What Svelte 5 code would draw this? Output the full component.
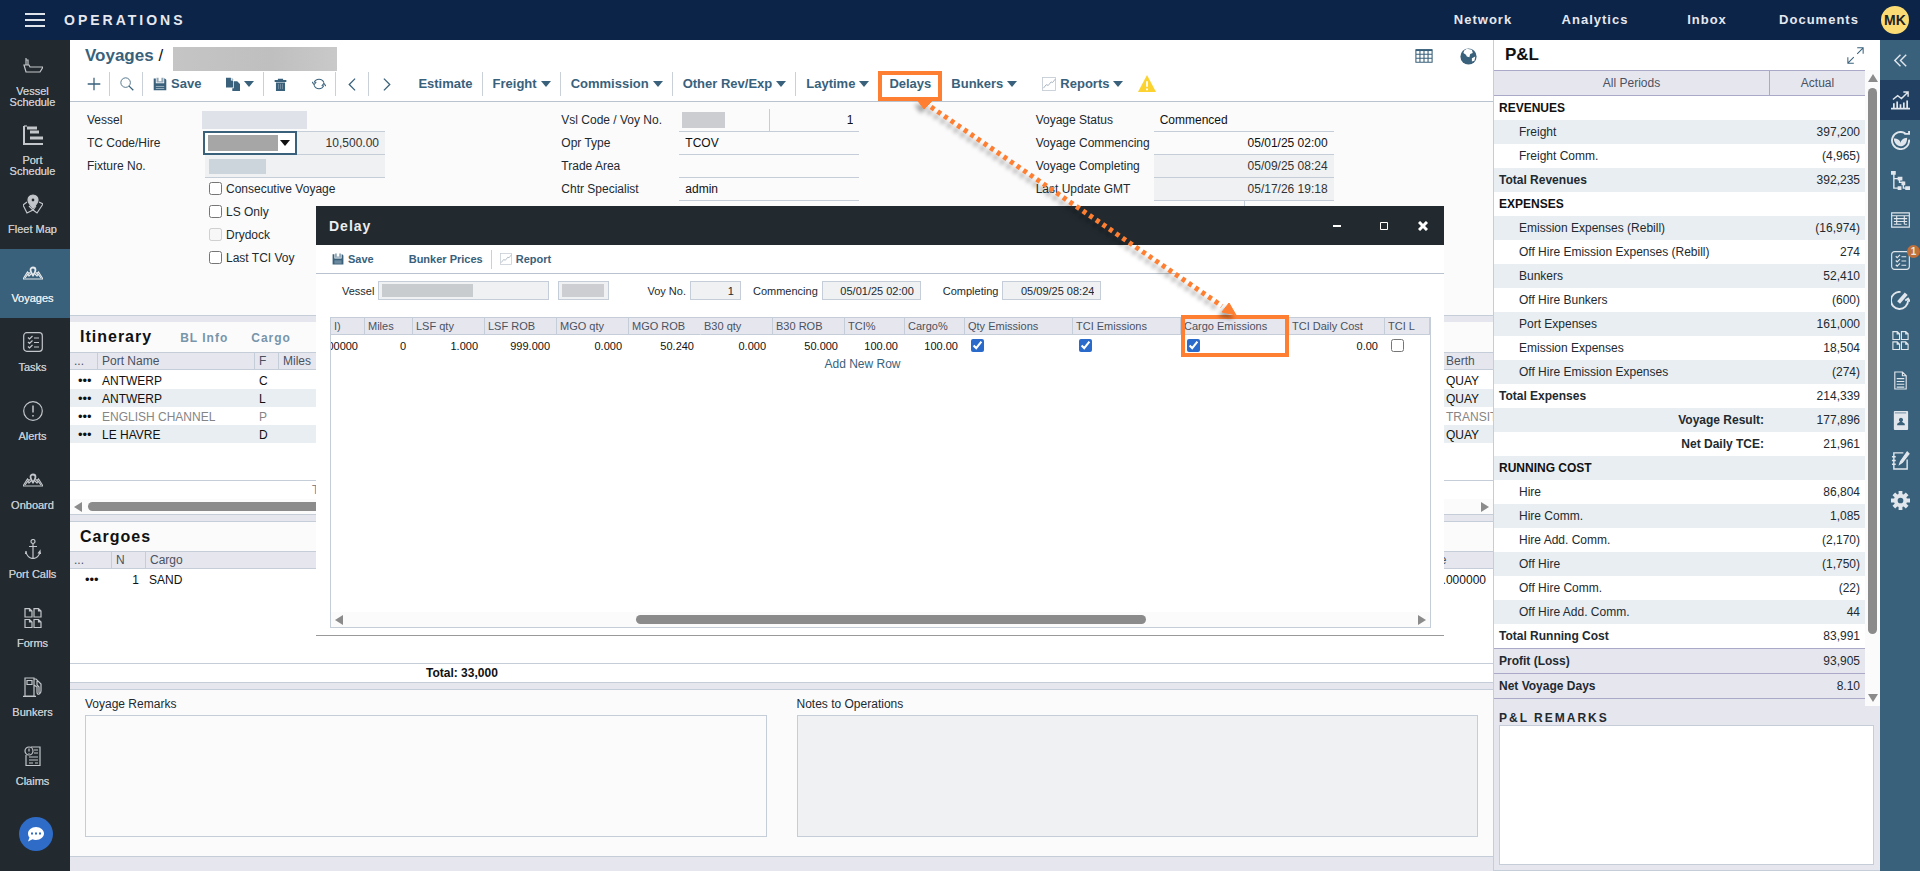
<script>
	const icons = {
		vessel: '<path d="M3 2v7M1 9h5l1 2h13l-3 5H3L1 9zM3 4h2v5" />',
		port: '<path d="M1 1v18h19" stroke-width="2"/><path d="M4 3h10M7 7h9M7 13h13" stroke-width="3"/><path d="M1 1h3" />',
		map: '<path d="M4 8l-4 3 4 8 6-3 4 3 6-9-4-2M6 12l4 4 3-4" /><path fill="currentColor" d="M10 1a5 5 0 0 0-5 5c0 3 5 8 5 8s5-5 5-8a5 5 0 0 0-5-5zm0 3a2 2 0 1 1 0 4 2 2 0 0 1 0-4z" fill-rule="evenodd"/>',
		voyage: '<path d="M0 16h20l-4.500-7-1.500 1.500-1-1M0 16l4.500-7 1.500 1.500 1-1" /><path d="M2 15l3-4 1 2 2-2M18 15l-3-4-1 2-2-2" /><path d="M10 4.500a2.500 2.500 0 0 0-2.500 2.500c0 2 2.500 5.500 2.500 5.500s2.500-3.500 2.500-5.500a2.500 2.500 0 0 0-2.500-2.500z" stroke-width="1.800"/>',
		tasks: '<rect x="0.7" y="0.7" width="18.6" height="18.6" rx="3"/><path d="M5 5.500l1.500 1.500 3-3M5 10l1.500 1.500 3-3M5 14.500l1.500 1.500 3-3M11 6h5M11 10.500h5M11 15h5" />',
		alert: '<circle cx="10" cy="10" r="9.300"/><path d="M10 4.500v7M10 14v1.500" stroke-width="1.500"/>',
		anchor: '<circle cx="10" cy="2.500" r="2"/><path d="M10 4.500v15M6 7.500h8M3 12c0 5 4 7.500 7 7.500s7-2.500 7-7.500l-2 2.500M3 12l-.500 3M17 12l.500 3" />',
		forms: '<path d="M2 .7h4.500L9 3v6H2zM11 .7h4.500L18 3v6h-7zM2 11.500h4.500L9 14v5.500H2zM11 11.500h4.500L18 14v5.500h-7zM6.500.7V3H9M15.500.7V3H18M6.500 11.500V14H9M15.500 11.500V14H18" />',
		fuel: '<path d="M2 19V1h9v18zM0 19.300h13M4 3.500h5v4H4zM11 2h2l5 5v7c0 3-4 5-4 1v-5l-3-2M14 4v4l2 2v6" />',
		claims: '<path d="M8 1h9v18.500H3V9M11 4h4M11 7h4M6 11h9M6 14h9M6 17h4M12 17h3" /><circle cx="6" cy="5" r="4"/><path d="M6 2.500v3M6 7v.800" />',
		plus: '<path d="M10 1v18M1 10h18" stroke-width="1.800"/>',
		search: '<circle cx="8" cy="8" r="6.800"/><path d="M13 13l6 6" stroke-width="1.800"/>',
		save: '<path fill="currentColor" stroke="none" d="M1 2h3v7h12V2h1l2 2v15H1z"/><path stroke="none" fill="currentColor" opacity=".55" d="M5 1h3v5h4V1h3v7H5z"/><path d="M4 13.500h12M4 16.500h12" stroke="#fff" opacity=".6"/>',
		copy: '<path fill="currentColor" stroke="none" d="M0 1h7v4h3v10H0zM11 6h5l4 4v10H9v-4h2z"/><path fill="currentColor" stroke="none" opacity=".6" d="M8 1l3 3H8z"/>',
		trash: '<path fill="currentColor" stroke="none" d="M1 3h5V1h8v2h5v3H1zM3 7h14v13H3z"/><path d="M7 9v8M10 9v8M13 9v8" stroke="#7f98aa"/>',
		refresh: '<path d="M3 8a7.500 7.500 0 0 1 14 0M17 12a7.500 7.500 0 0 1-14 0M0 7l3 4 3-4M20 13l-3-4-3 4" stroke-width="1.500"/>',
		prev: '<path d="M14 1L5 10l9 9" stroke-width="2"/>',
		next: '<path d="M6 1l9 9-9 9" stroke-width="2"/>',
		report: '<rect x=".7" y=".7" width="18.600" height="18.600" stroke="#c3cad2"/><path d="M2 16l4-5 3 1 4-5 2 1 4-5" stroke="#9aa8b5"/>',
		warning: '<path fill="#fbd230" stroke="none" d="M10 0l10 19H0z"/><path d="M10 7v6M10 15v2" stroke="#fff" stroke-width="2"/>',
		sheet: '<path d="M1 3h18v14H1zM1 8h18M1 12.500h18M5.500 3v14M10 3v14M14.500 3v14" /><path d="M1 3.500h18" stroke-width="2"/>',
		globe: '<circle cx="10" cy="10" r="9.500" fill="currentColor" stroke="none"/><path fill="#fff" stroke="none" d="M8 1l6 1 1 4-3 1-1 4-3-1-1-2-3-2 1-3zM14 12l4-2-1 5-3 1z"/>',
		expand: '<path d="M12 1h7v7M19 1l-7 7M8 19H1v-7M1 19l7-7" />',
		collapse: '<path d="M10 4l-6 6 6 6M16 4l-6 6 6 6" stroke-width="1.500"/>',
		chart: '<path d="M0 18.500h20M3 18v-5M6.500 18v-7M10 18v-4M13.500 18v-6M17 18v-8" stroke-width="1.800"/><path d="M2 9l5-4 4 3 7-7M13 1h5v5" stroke-width="1.500"/>',
		eco: '<path d="M15 2.500A9 9 0 1 0 19 9" stroke-width="2"/><path d="M14 3h5V0" stroke-width="2"/><path fill="currentColor" stroke="none" d="M3 8c4 0 7 2 7 5 0-3 3-6 7-6 0 6-3 9-7 9s-7-4-7-8z"/>',
		tree: '<path d="M3 2v16h6M3 8h6M9 8v4h4v6h5" stroke-width="1.500"/><path fill="currentColor" stroke="none" d="M0 0h5v4H0zM7 6h5v4H7zM11 11h4v4h-4zM7 16h4v4H7zM15 16h5v4h-5z"/>',
		invoice: '<path d="M.7 2h18.600v15H.7zM.7 5h18.600M3 8h14M3 11h14M3 14h8M6 5v9M14 14h3M14 5v9" />',
		edit: '<path d="M10 1a9 9 0 1 0 8 9M15 10l3-2 2 3" stroke-width="2"/><path d="M8 12l8-9" stroke-width="4"/>',
		doc: '<path d="M4 1h8l4 4v14H4zM12 1v4h4M6 8h8M6 11h8M6 14h8M6 17h8" />',
		contact: '<rect x="3" y="0" width="15" height="20" rx="1" fill="currentColor" stroke="none"/><path fill="#39617b" stroke="none" d="M10.500 7a2.300 2.300 0 0 1 1 4.300l3 2V15h-8v-1.700l3-2a2.300 2.300 0 0 1 1-4.300z"/><path d="M4 2h12" stroke="#39617b" stroke-width=".7"/>',
		notes: '<path d="M13 2H3v17h14V9M1 6h4M1 10h4M1 14h4" stroke-width="1.500"/><path d="M9 14l1-3 7-10 2 2-7 9z" fill="currentColor"/>',
		gear: '<circle cx="10" cy="10" r="5" stroke-width="4"/><path d="M10 0v4M10 16v4M0 10h4M16 10h4M3 3l3 3M14 14l3 3M3 17l3-3M14 6l3-3" stroke-width="4"/>'
	};

	const nav = [
		['vessel', 'Vessel Schedule'],
		['port', 'Port Schedule'],
		['map', 'Fleet Map'],
		['voyage', 'Voyages'],
		['tasks', 'Tasks'],
		['alert', 'Alerts'],
		['voyage', 'Onboard'],
		['anchor', 'Port Calls'],
		['forms', 'Forms'],
		['fuel', 'Bunkers'],
		['claims', 'Claims']
	];

	const rail = ['collapse', 'chart', 'eco', 'tree', 'invoice', 'tasks', 'edit', 'forms', 'doc', 'contact', 'notes', 'gear'];

	const menus = [
		{label: 'Estimate'},
		{label: 'Freight', caret: true},
		{label: 'Commission', caret: true},
		{label: 'Other Rev/Exp', caret: true},
		{label: 'Laytime', caret: true},
		{label: 'Delays', marked: true},
		{label: 'Bunkers', caret: true, gap: true},
		{label: 'Reports', caret: true, icon: 'report', gap: true}
	];

	const checks = ['Consecutive Voyage', 'LS Only', 'Drydock', 'Last TCI Voy'];

	const ports = [
		['ANTWERP', 'C', 'QUAY'],
		['ANTWERP', 'L', 'QUAY'],
		['ENGLISH CHANNEL', 'P', 'TRANSIT'],
		['LE HAVRE', 'D', 'QUAY']
	];

	const delayCols = [
		['I)', '0.000000', 34],
		['Miles', '0', 48],
		['LSF qty', '1.000', 72],
		['LSF ROB', '999.000', 72],
		['MGO qty', '0.000', 72],
		['MGO ROB', '50.240', 72],
		['B30 qty', '0.000', 72],
		['B30 ROB', '50.000', 72],
		['TCI%', '100.00', 60],
		['Cargo%', '100.00', 60],
		['Qty Emissions', true, 108],
		['TCI Emissions', true, 108],
		['Cargo Emissions', true, 108],
		['TCI Daily Cost', '0.00', 96],
		['TCI L', false, 0]
	];

	// type: h = heading, t = total, r = right aligned result, f = footer band
	const pnl = [
		['h', 'REVENUES', ''],
		['', 'Freight', '397,200'],
		['', 'Freight Comm.', '(4,965)'],
		['t', 'Total Revenues', '392,235'],
		['h', 'EXPENSES', ''],
		['', 'Emission Expenses (Rebill)', '(16,974)'],
		['', 'Off Hire Emission Expenses (Rebill)', '274'],
		['', 'Bunkers', '52,410'],
		['', 'Off Hire Bunkers', '(600)'],
		['', 'Port Expenses', '161,000'],
		['', 'Emission Expenses', '18,504'],
		['', 'Off Hire Emission Expenses', '(274)'],
		['t', 'Total Expenses', '214,339'],
		['r', 'Voyage Result:', '177,896'],
		['r', 'Net Daily TCE:', '21,961'],
		['h', 'RUNNING COST', ''],
		['', 'Hire', '86,804'],
		['', 'Hire Comm.', '1,085'],
		['', 'Hire Add. Comm.', '(2,170)'],
		['', 'Off Hire', '(1,750)'],
		['', 'Off Hire Comm.', '(22)'],
		['', 'Off Hire Add. Comm.', '44'],
		['t', 'Total Running Cost', '83,991'],
		['f', 'Profit (Loss)', '93,905'],
		['f', 'Net Voyage Days', '8.10']
	];
</script>

{#snippet icon(name, size = 20)}
	<svg class="icon" width={size} height={size} viewBox="0 0 20 20" fill="none" stroke="currentColor" stroke-width="1.2" aria-hidden="true">
		{@html icons[name]}
	</svg>
{/snippet}

{#snippet caret()}
	<svg class="caret" width="10" height="6" viewBox="0 0 10 6" aria-hidden="true"><path d="M0 0h10L5 6z" fill="currentColor" /></svg>
{/snippet}

{#snippet hscroll(start, size)}
	<div class="hscroll">
		<svg width="8" height="10" viewBox="0 0 8 10"><path d="M8 0v10L0 5z" fill="#8b8b8b" /></svg>
		<div class="track"><div class="thumb" style="margin-left: {start}%; width: {size}%"></div></div>
		<svg width="8" height="10" viewBox="0 0 8 10"><path d="M0 0v10l8-5z" fill="#8b8b8b" /></svg>
	</div>
{/snippet}

<div class="shell">
	<header class="topbar">
		<button class="burger" aria-label="Menu"><span></span><span></span><span></span></button>
		<span class="module">OPERATIONS</span>
		<nav class="toplinks">
			<a href="#network">Network</a>
			<a href="#analytics">Analytics</a>
			<a href="#inbox">Inbox</a>
			<a href="#documents">Documents</a>
		</nav>
		<button class="avatar">MK</button>
	</header>

	<div class="body">
		<nav class="sidebar">
			{#each nav as [name, label]}
				<a class="nav-item" class:active={label === 'Voyages'} href="#{name}">
					{@render icon(name)}
					<span>{label}</span>
				</a>
			{/each}
			<button class="chat" aria-label="Chat">
				<svg width="16" height="15" viewBox="0 0 16 15">
					<path d="M8 0c4.500 0 8 3 8 6.500S12.500 13 8 13c-1.500 0-2.500-.2-3.500-.7L0 14.500l1.500-4C.5 9.500 0 8 0 6.500 0 3 3.500 0 8 0z" fill="#fff" />
					<path d="M3 5.500h2v2H3zM7 5.500h2v2H7zM11 5.500h2v2h-2z" fill="#2f6cc7" />
				</svg>
			</button>
		</nav>

		<main>
			<div class="page-head">
				<div class="title-row">
					<h1><a href="#voyages">Voyages</a> /</h1>
					<span class="redact title-redact"></span>
					<div class="head-tools">
						<button aria-label="Grid">{@render icon('sheet', 18)}</button>
						<button aria-label="Globe">{@render icon('globe', 17)}</button>
					</div>
				</div>
				<div class="toolbar">
					<button class="tool narrow" aria-label="New">{@render icon('plus', 14)}</button>
					<button class="tool narrow" aria-label="Search">{@render icon('search', 14)}</button>
					<button class="tool gap">{@render icon('save', 14)}Save</button>
					<button class="tool" aria-label="Copy">{@render icon('copy', 14)}{@render caret()}</button>
					<button class="tool gap" aria-label="Delete">{@render icon('trash', 13)}</button>
					<button class="tool" aria-label="Refresh">{@render icon('refresh', 14)}</button>
					<button class="tool narrow" aria-label="Previous">{@render icon('prev', 13)}</button>
					<button class="tool narrow gap" aria-label="Next">{@render icon('next', 13)}</button>
					{#each menus as m}
						<button class="tool" class:gap={m.gap} class:marked={m.marked}>
							{#if m.icon}{@render icon(m.icon, 14)}{/if}
							{m.label}
							{#if m.caret}{@render caret()}{/if}
						</button>
					{/each}
					<span class="warning">{@render icon('warning', 18)}</span>
				</div>
			</div>

			<form class="details">
				<div class="group">
					<div class="row">
						<label for="vessel">Vessel</label>
						<div class="field"><span class="redact vessel-redact"></span><input id="vessel" /></div>
					</div>
					<div class="row">
						<label for="tc">TC Code/Hire</label>
						<div class="field locked">
							<div class="combo">
								<select id="tc"><option></option></select>
								{@render caret()}
							</div>
							<input class="num" aria-label="Hire" value="10,500.00" readonly />
						</div>
					</div>
					<div class="row">
						<label for="fixture">Fixture No.</label>
						<div class="field locked"><span class="redact fixture-redact"></span><input id="fixture" readonly /></div>
					</div>
					{#each checks as c}
						<label class="check"><input type="checkbox" disabled={c === 'Drydock'} />{c}</label>
					{/each}
				</div>

				<div class="group">
					<div class="row">
						<label for="voy">Vsl Code / Voy No.</label>
						<div class="field"><div class="half"><span class="redact code-redact"></span></div><input id="voy" class="num" value="1" /></div>
					</div>
					<div class="row">
						<label for="opr">Opr Type</label>
						<div class="field"><input id="opr" value="TCOV" /></div>
					</div>
					<div class="row">
						<label for="area">Trade Area</label>
						<div class="field"><input id="area" /></div>
					</div>
					<div class="row">
						<label for="chtr">Chtr Specialist</label>
						<div class="field"><input id="chtr" value="admin" /></div>
					</div>
				</div>

				<div class="group">
					<div class="row">
						<label for="status">Voyage Status</label>
						<div class="field"><input id="status" value="Commenced" /></div>
					</div>
					<div class="row">
						<label for="commencing">Voyage Commencing</label>
						<div class="field"><input id="commencing" class="num" value="05/01/25 02:00" /></div>
					</div>
					<div class="row">
						<label for="completing">Voyage Completing</label>
						<div class="field locked"><input id="completing" class="num" value="05/09/25 08:24" readonly /></div>
					</div>
					<div class="row">
						<label for="update">Last Update GMT</label>
						<div class="field locked"><input id="update" class="num" value="05/17/26 19:18" readonly /></div>
					</div>
					<div class="row">
						<span></span>
						<div class="field"><div class="half"></div></div>
					</div>
				</div>
			</form>

			<div class="splitter"></div>

			<section class="itinerary">
				<div class="section-head">
					<h2>Itinerary</h2>
					<a href="#bl">BL Info</a>
					<a href="#cargo">Cargo</a>
				</div>
				<table class="grid">
					<colgroup><col style="width: 28px" /><col style="width: 157px" /><col style="width: 24px" /><col /><col style="width: 51px" /></colgroup>
					<thead>
						<tr><th>...</th><th>Port Name</th><th>F</th><th>Miles</th><th>Berth</th></tr>
					</thead>
					<tbody>
						{#each ports as [port, fn, berth]}
							<tr class:muted={fn === 'P'}><td class="dots">•••</td><td>{port}</td><td>{fn}</td><td></td><td>{berth}</td></tr>
						{/each}
					</tbody>
				</table>
				<div class="total-row itinerary-total">Total:</div>
				{@render hscroll(0, 70)}
			</section>

			<div class="splitter lined"></div>

			<section class="cargoes">
				<div class="section-head"><h2>Cargoes</h2></div>
				<table class="grid cargo-grid">
					<colgroup><col style="width: 42px" /><col style="width: 34px" /><col /><col style="width: 76px" /></colgroup>
					<thead>
						<tr><th>...</th><th>N</th><th>Cargo</th><th>Rate</th></tr>
					</thead>
					<tbody>
						<tr><td class="dots">•••</td><td class="right">1</td><td>SAND</td><td class="right">10.000000</td></tr>
					</tbody>
				</table>
				<div class="total-row cargo-total">Total: 33,000</div>
			</section>

			<div class="splitter lined"></div>

			<section class="remarks">
				<div>
					<label for="voyage-remarks">Voyage Remarks</label>
					<textarea id="voyage-remarks"></textarea>
				</div>
				<div>
					<label for="ops-notes">Notes to Operations</label>
					<textarea id="ops-notes" class="locked" readonly></textarea>
				</div>
			</section>
			<div class="bottom-band"></div>

			<div class="window" role="dialog" aria-label="Delay">
				<div class="window-title">
					<h2>Delay</h2>
					<button aria-label="Minimize"><svg width="10" height="10"><path d="M1 5h8" stroke="#fff" stroke-width="2" /></svg></button>
					<button aria-label="Maximize"><svg width="10" height="10"><path d="M1.500 1.500h7v7h-7z" stroke="#fff" fill="none" /></svg></button>
					<button aria-label="Close"><svg width="10" height="10"><path d="M1 1l8 8M9 1L1 9" stroke="#fff" stroke-width="3" /></svg></button>
				</div>
				<div class="window-tools">
					<button>{@render icon('save', 12)}Save</button>
					<button class="prices">Bunker Prices</button>
					<button>{@render icon('report', 12)}Report</button>
				</div>
				<div class="window-fields">
					<label for="w-vessel">Vessel</label>
					<div class="box wide"><span class="redact"></span><input id="w-vessel" readonly /></div>
					<div class="box code"><span class="redact"></span></div>
					<label for="w-voy">Voy No.</label>
					<div class="box no"><input id="w-voy" value="1" readonly /></div>
					<label for="w-com">Commencing</label>
					<div class="box date"><input id="w-com" value="05/01/25 02:00" readonly /></div>
					<label for="w-cpl">Completing</label>
					<div class="box date"><input id="w-cpl" value="05/09/25 08:24" readonly /></div>
				</div>
				<div class="window-grid">
					<table>
						<colgroup>
							{#each delayCols as [, , w]}<col style={w ? `width: ${w}px` : ''} />{/each}
						</colgroup>
						<thead>
							<tr>
								{#each delayCols as [label]}<th class:plain={label === 'MGO ROB'}>{label}</th>{/each}
							</tr>
						</thead>
						<tbody>
							<tr>
								{#each delayCols as [label, value]}
									<td class:highlight={label === 'Cargo Emissions'}>
										{#if typeof value === 'boolean'}
											<input type="checkbox" checked={value} aria-label={label} />
										{:else}
											<div class="val">{value}</div>
										{/if}
									</td>
								{/each}
							</tr>
						</tbody>
					</table>
					<button class="add-row">Add New Row</button>
					<div class="filler"></div>
					{@render hscroll(27, 48)}
				</div>
			</div>

			<svg class="arrow" width="330" height="230" viewBox="0 0 330 230" aria-hidden="true">
				<path d="M17 8L308 207" stroke="#ff7f32" stroke-width="5" stroke-dasharray="4 4" />
				<path d="M4 2h14l-8 8zM315 204l7 12-14-3z" fill="#ff7f32" stroke="#ff7f32" />
			</svg>
		</main>

		<aside class="pnl">
			<div class="pnl-head">
				<h2>P&amp;L</h2>
				<button aria-label="Expand">{@render icon('expand', 17)}</button>
			</div>
			<div class="pnl-body">
				<table>
					<colgroup><col /><col style="width: 96px" /></colgroup>
					<thead>
						<tr><th>All Periods</th><th>Actual</th></tr>
					</thead>
					<tbody>
						{#each pnl as [kind, label, value]}
							<tr class="kind-{kind || 'item'}"><td>{label}</td><td>{value}</td></tr>
						{/each}
					</tbody>
				</table>
				<div class="vscroll">
					<svg width="10" height="8" viewBox="0 0 10 8"><path d="M5 0l5 8H0z" fill="#8b8b8b" /></svg>
					<div class="vtrack"><div class="vthumb"></div></div>
					<svg width="10" height="8" viewBox="0 0 10 8"><path d="M0 0h10L5 8z" fill="#8b8b8b" /></svg>
				</div>
			</div>
			<div class="pnl-remarks">
				<label for="pnl-remarks">P&amp;L REMARKS</label>
				<textarea id="pnl-remarks"></textarea>
			</div>
		</aside>

		<nav class="rail">
			{#each rail as name}
				<button class:active={name === 'chart'} aria-label={name}>
					{@render icon(name, 19)}
					{#if name === 'tasks'}<span class="badge">1</span>{/if}
				</button>
			{/each}
		</nav>
	</div>
</div>

<style>
	:global(body) {
		margin: 0;
	}

	.shell {
		display: flex;
		flex-direction: column;
		min-height: 100vh;
		font: 12px/14px "Liberation Sans", Arial, sans-serif;
		color: #222a30;
		background: #fff;
	}

	.shell :global(*) {
		box-sizing: border-box;
	}

	button, input, select, textarea {
		font: inherit;
		color: inherit;
		border: 0;
		padding: 0;
		margin: 0;
		background: none;
		border-radius: 0;
	}

	button {
		cursor: pointer;
	}

	a {
		color: inherit;
		text-decoration: none;
	}

	h1, h2 {
		margin: 0;
	}

	table {
		border-collapse: separate;
		border-spacing: 0;
		table-layout: fixed;
		width: 100%;
	}

	th, td {
		padding: 0;
		font-weight: normal;
		text-align: left;
		white-space: nowrap;
		overflow: hidden;
	}

	.icon, .caret {
		flex: none;
		display: block;
	}

	.redact {
		display: block;
		background: #cbcdd1;
	}

	.topbar {
		display: flex;
		align-items: center;
		height: 40px;
		padding: 0 11px 0 25px;
		background: #0c2448;
		color: #e6e8ef;
	}

	.burger {
		display: flex;
		flex-direction: column;
		gap: 4px;
		width: 20px;
	}

	.burger span {
		height: 2px;
		background: #dfe3ea;
	}

	.module {
		margin-left: 19px;
		font-size: 14px;
		font-weight: bold;
		letter-spacing: 3px;
	}

	.toplinks {
		display: flex;
		margin-left: auto;
		margin-right: 6px;
		font-size: 13px;
		font-weight: bold;
		letter-spacing: 1px;
	}

	.toplinks a {
		width: 112px;
		text-align: center;
	}

	.avatar {
		width: 28px;
		height: 28px;
		border-radius: 50%;
		background: #fbdc74;
		color: #222;
		font-size: 14px;
		font-weight: bold;
	}

	.body {
		flex: 1;
		display: flex;
	}

	.sidebar {
		flex: none;
		display: flex;
		flex-direction: column;
		width: 70px;
		padding: 2px 0 20px;
		background: #222a30;
		color: #c3c6ca;
		font-size: 11px;
		line-height: 11px;
		text-align: center;
	}

	.nav-item {
		display: flex;
		flex-direction: column;
		align-items: center;
		gap: 10px;
		height: 69px;
		padding: 14px 10px 0 5px;
		text-shadow: 0 0 0 currentColor;
	}

	.nav-item.active {
		background: #39617b;
		color: #e6e9ec;
	}

	.chat {
		display: flex;
		align-items: center;
		justify-content: center;
		width: 34px;
		height: 34px;
		margin: auto 0 0 19px;
		border-radius: 50%;
		background: #2f6cc7;
	}

	main {
		position: relative;
		flex: 1;
		min-width: 0;
		display: flex;
		flex-direction: column;
	}

	.page-head {
		padding-bottom: 5px;
		border-bottom: 1px solid #b8c3cf;
		color: #39617b;
	}

	.title-row {
		display: flex;
		align-items: flex-start;
		height: 32px;
		padding: 7px 16px 0 15px;
	}

	h1 {
		font-size: 17px;
		line-height: 18px;
		color: #111;
		font-weight: normal;
	}

	h1 a {
		font-weight: bold;
		color: #39617b;
	}

	.title-redact {
		width: 164px;
		height: 24px;
		margin-left: 10px;
		background: linear-gradient(90deg, #c5c5c5, #bfbfbf 60%, #c9c9ca);
	}

	.head-tools {
		display: flex;
		gap: 27px;
		margin-left: auto;
	}

	.toolbar {
		display: flex;
		padding-left: 7px;
		height: 24px;
		font-size: 13px;
		font-weight: bold;
	}

	.tool {
		position: relative;
		display: flex;
		align-items: center;
		gap: 4px;
		padding: 0 9px 0 10px;
		border-right: 1px solid #c9d0d8;
		white-space: nowrap;
	}

	.tool.narrow {
		justify-content: center;
		width: 33px;
	}

	.tool.gap {
		border-right: 0;
		margin-right: 6px;
	}

	.tool.marked::after {
		content: "";
		position: absolute;
		inset: -1px -2px -5px -1px;
		border: 4px solid #ff7f32;
	}

	.warning {
		display: flex;
		align-items: center;
	}

	.details {
		display: grid;
		grid-template-columns: repeat(3, 1fr);
		height: 214px;
		padding-top: 7px;
		border-bottom: 1px solid #c5cdd8;
		background: #fbfbfc;
	}

	.group {
		padding-left: 17px;
	}

	.row {
		display: grid;
		grid-template-columns: 118px 180px;
		align-items: center;
		height: 23px;
	}

	.row label {
		padding-bottom: 2px;
		white-space: nowrap;
	}

	.field {
		position: relative;
		display: flex;
		align-items: center;
		height: 23px;
		border-bottom: 1px solid #c5cdd8;
		color: #111;
	}

	.field.locked {
		background: #f0f1f3;
		color: #333;
	}

	.field input {
		flex: 1;
		min-width: 0;
		height: 22px;
		padding: 0 6px;
	}

	.num {
		text-align: right;
	}

	.vessel-redact {
		width: 105px;
		height: 18px;
		margin-left: -3px;
		background: #dfe3e9;
	}

	.combo {
		position: relative;
		flex: none;
		display: flex;
		align-items: center;
		height: 24px;
		margin: -1px 0 0 -2px;
		padding-right: 5px;
		border: 2px solid #39617b;
		background: #fff;
		color: #111;
	}

	.combo select {
		appearance: none;
		width: 70px;
		height: 16px;
		margin: 0 2px 0 3px;
		background: #a6a6a6;
	}

	.fixture-redact {
		width: 57px;
		height: 15px;
		margin-left: 4px;
		background: #cdd5dc;
	}

	.half {
		width: 91px;
		height: 22px;
		padding: 3px;
		border-right: 1px solid #c5cdd8;
	}

	.code-redact {
		width: 43px;
		height: 16px;
	}

	.check {
		display: flex;
		align-items: center;
		gap: 4px;
		height: 23px;
		margin-left: 122px;
		padding-bottom: 2px;
	}

	input[type="checkbox"] {
		width: 13px;
		height: 13px;
		accent-color: #2a6acb;
	}

	.splitter {
		height: 6px;
		background: #e6e6ef;
	}

	.splitter.lined {
		height: 7px;
		border-bottom: 1px solid #c5cdd8;
	}

	.itinerary, .cargoes {
		display: flex;
		flex-direction: column;
		border-bottom: 1px solid #c5cdd8;
	}

	.itinerary {
		height: 193px;
	}

	.cargoes {
		height: 161px;
	}

	.section-head {
		display: flex;
		align-items: baseline;
		gap: 28px;
		height: 30px;
		padding: 6px 10px 0;
		background: #fbfbfc;
		color: #7895aa;
		font-weight: bold;
		letter-spacing: 1px;
	}

	.cargoes .section-head {
		height: 29px;
	}

	.section-head a + a {
		margin-left: -5px;
	}

	.section-head h2 {
		font-size: 16px;
		line-height: 18px;
		color: #111;
	}

	.grid {
		color: #111;
	}

	.grid th {
		height: 18px;
		padding-left: 4px;
		border: solid #c5cdd8;
		border-width: 1px 1px 1px 0;
		background: #e6e6ef;
		color: #4a5260;
	}

	.grid td {
		height: 18px;
		padding: 1px 0 0 4px;
	}

	.grid th:last-child {
		border-right: 0;
	}

	.grid .dots {
		padding-left: 8px;
		font-size: 13px;
		line-height: 14px;
	}

	.grid tr:nth-child(even) {
		background: #e9eef2;
	}

	.grid .muted td:not(.dots) {
		color: #858585;
	}

	.grid .right {
		padding-right: 7px;
		text-align: right;
	}

	.itinerary tr:first-child td {
		height: 19px;
		padding-top: 2px;
	}

	.cargo-grid td {
		height: 22px;
		padding: 0 0 0 3px;
	}

	.cargo-grid .dots {
		padding-left: 15px;
	}

	.total-row {
		height: 19px;
		margin-top: auto;
		border-top: 1px solid #c5cdd8;
		line-height: 19px;
		white-space: nowrap;
	}

	.itinerary-total {
		padding-left: 242px;
		color: #888;
	}

	.cargo-total {
		padding-left: 356px;
		color: #111;
		font-weight: bold;
	}

	.hscroll {
		flex: none;
		display: flex;
		align-items: center;
		gap: 6px;
		height: 15px;
		padding: 0 4px;
		background: #fbfbfc;
	}

	.track {
		flex: 1;
	}

	.thumb {
		height: 9px;
		border-radius: 5px;
		background: #8b8b8b;
	}

	.remarks {
		flex: 1;
		display: grid;
		grid-template-columns: 1fr 1fr;
		gap: 30px;
		min-height: 167px;
		padding: 7px 15px 19px;
		border-bottom: 1px solid #c5cdd8;
		background: #fbfbfc;
	}

	.remarks div {
		display: flex;
		flex-direction: column;
		gap: 4px;
	}

	textarea {
		flex: 1;
		border: 1px solid #c5cdd8;
		resize: none;
	}

	textarea.locked {
		background: #f0f1f3;
	}

	.bottom-band {
		height: 14px;
		background: #e6e6ef;
	}

	.window {
		position: absolute;
		top: 166px;
		left: 246px;
		right: 49px;
		display: flex;
		flex-direction: column;
		height: 430px;
		border-bottom: 1px solid #999;
		background: #fff;
		font-size: 11px;
	}

	.window-title {
		display: flex;
		align-items: center;
		gap: 37px;
		height: 39px;
		padding: 0 16px 0 13px;
		background: #222a30;
		color: #eceef0;
	}

	.window-title button {
		display: flex;
	}

	.window-title button:last-child {
		margin-left: -8px;
	}

	.window-title h2 {
		flex: 1;
		font-size: 14px;
		letter-spacing: 1px;
	}

	.window-tools {
		display: flex;
		align-items: center;
		height: 29px;
		padding-left: 8px;
		border-bottom: 1px solid #b8c3cf;
		color: #39617b;
		font-weight: bold;
	}

	.window-tools button {
		display: flex;
		align-items: center;
		gap: 4px;
		height: 19px;
		padding: 0 8px;
	}

	.window-tools .prices {
		margin-left: 19px;
		border-right: 1px solid #c9d0d8;
	}

	.window-fields {
		display: flex;
		align-items: center;
		gap: 4px;
		height: 43px;
		padding: 0 0 10px 26px;
	}

	.box {
		display: flex;
		align-items: center;
		height: 19px;
		border: 1px solid #c5cdd8;
		background: #f0f1f3;
	}

	.box input {
		width: 100%;
		padding-right: 6px;
		text-align: right;
	}

	.box .redact {
		flex: none;
		width: 42px;
		height: 13px;
		margin-left: 3px;
		background: #cdced2;
	}

	.box.wide {
		width: 171px;
	}

	.box.wide .redact {
		width: 91px;
		background: #c9cccf;
	}

	.box.wide input {
		min-width: 0;
		flex: 1;
	}

	.box.code {
		width: 51px;
		margin: 0 34px 0 5px;
	}

	.box.no {
		width: 51px;
		margin-right: 8px;
	}

	.box.date {
		width: 99px;
		margin-right: 18px;
	}

	.window-grid {
		display: flex;
		flex-direction: column;
		flex: 1;
		margin: 0 13px 7px 14px;
		border: 1px solid #c5cdd8;
	}

	.window-grid th {
		height: 17px;
		padding-left: 3px;
		border: solid #c5cdd8;
		border-width: 0 1px 1px 0;
		background: #e6e6ef;
		color: #4a5260;
	}

	.window-grid th.plain {
		border-right-color: #e6e6ef;
	}

	.window-grid td {
		height: 22px;
		padding: 0 7px 0 0;
		color: #111;
	}

	.window-grid td.highlight {
		position: relative;
		overflow: visible;
	}

	.highlight::after {
		content: "";
		position: absolute;
		inset: -20px 0 0 0;
		border: 4px solid #ff7f32;
		pointer-events: none;
	}

	.window-grid input {
		display: block;
		margin: -2px 0 0 6px;
	}

	.val {
		display: flex;
		justify-content: flex-end;
	}

	.add-row {
		height: 14px;
		padding-right: 36px;
		color: #39617b;
		font-size: 12px;
		line-height: 14px;
	}

	.filler {
		flex: 1;
	}

	.arrow {
		position: absolute;
		top: 59px;
		left: 844px;
		filter: drop-shadow(-3px 4px 2px rgba(0, 0, 0, 0.35));
		pointer-events: none;
	}

	.pnl {
		flex: none;
		display: flex;
		flex-direction: column;
		width: 387px;
		border-left: 1px solid #c5cdd8;
		border-bottom: 1px solid #c5cdd8;
		background: #e6e6ef;
	}

	.pnl-head {
		display: flex;
		align-items: center;
		justify-content: space-between;
		height: 30px;
		padding: 0 16px 0 11px;
		background: #fff;
		color: #39617b;
	}

	.pnl-head h2 {
		font-size: 17px;
		color: #111;
	}

	.pnl-body {
		display: flex;
		align-items: stretch;
		height: 636px;
	}

	.pnl-body table {
		flex: 1;
		align-self: flex-start;
	}

	.pnl th {
		height: 26px;
		border: solid #aaaac8;
		border-width: 1px 0;
		background: #e6e6ef;
		color: #4a5260;
		text-align: center;
	}

	.pnl th:last-child {
		border-left-width: 1px;
	}

	.pnl td {
		height: 24px;
		padding: 0 5px 0 25px;
	}

	.pnl tbody tr {
		background: #fff;
	}

	.pnl tbody tr:nth-child(even) {
		background: #e9eef2;
	}

	.pnl td:last-child {
		padding: 0 5px;
		text-align: right;
	}

	.kind-h td:first-child, .kind-t td:first-child, .kind-f td:first-child {
		padding-left: 5px;
		font-weight: bold;
	}

	.kind-h td {
		color: #111;
	}

	.kind-r td:first-child {
		font-weight: bold;
		text-align: right;
	}

	.pnl tbody tr.kind-f {
		background: #e6e6ef;
	}

	.kind-f td, .kind-t:has(+ .kind-f) td {
		height: 25px;
		border-bottom: 1px solid #aaaac8;
	}

	.vscroll {
		display: flex;
		flex-direction: column;
		align-items: center;
		width: 15px;
		padding: 4px 0;
		background: #fbfbfc;
	}

	.vtrack {
		flex: 1;
		padding: 6px 0;
	}

	.vthumb {
		width: 9px;
		height: 91%;
		border-radius: 5px;
		background: #8b8b8b;
	}

	.pnl-remarks {
		flex: 1;
		display: flex;
		flex-direction: column;
		padding: 5px 6px 5px 5px;
	}

	.pnl-remarks label {
		font-weight: bold;
		letter-spacing: 2px;
	}

	.pnl-remarks textarea {
		background: #fff;
	}

	.rail {
		flex: none;
		width: 40px;
		background: #39617b;
		color: #e0e6ec;
	}

	.rail button {
		position: relative;
		display: flex;
		align-items: center;
		justify-content: center;
		width: 40px;
		height: 40px;
	}

	.rail .active {
		background: #213f60;
	}

	.badge {
		position: absolute;
		top: 5px;
		right: 0;
		width: 13px;
		height: 13px;
		border-radius: 50%;
		background: #c0703a;
		font-size: 10px;
		font-weight: bold;
		line-height: 13px;
	}
</style>
